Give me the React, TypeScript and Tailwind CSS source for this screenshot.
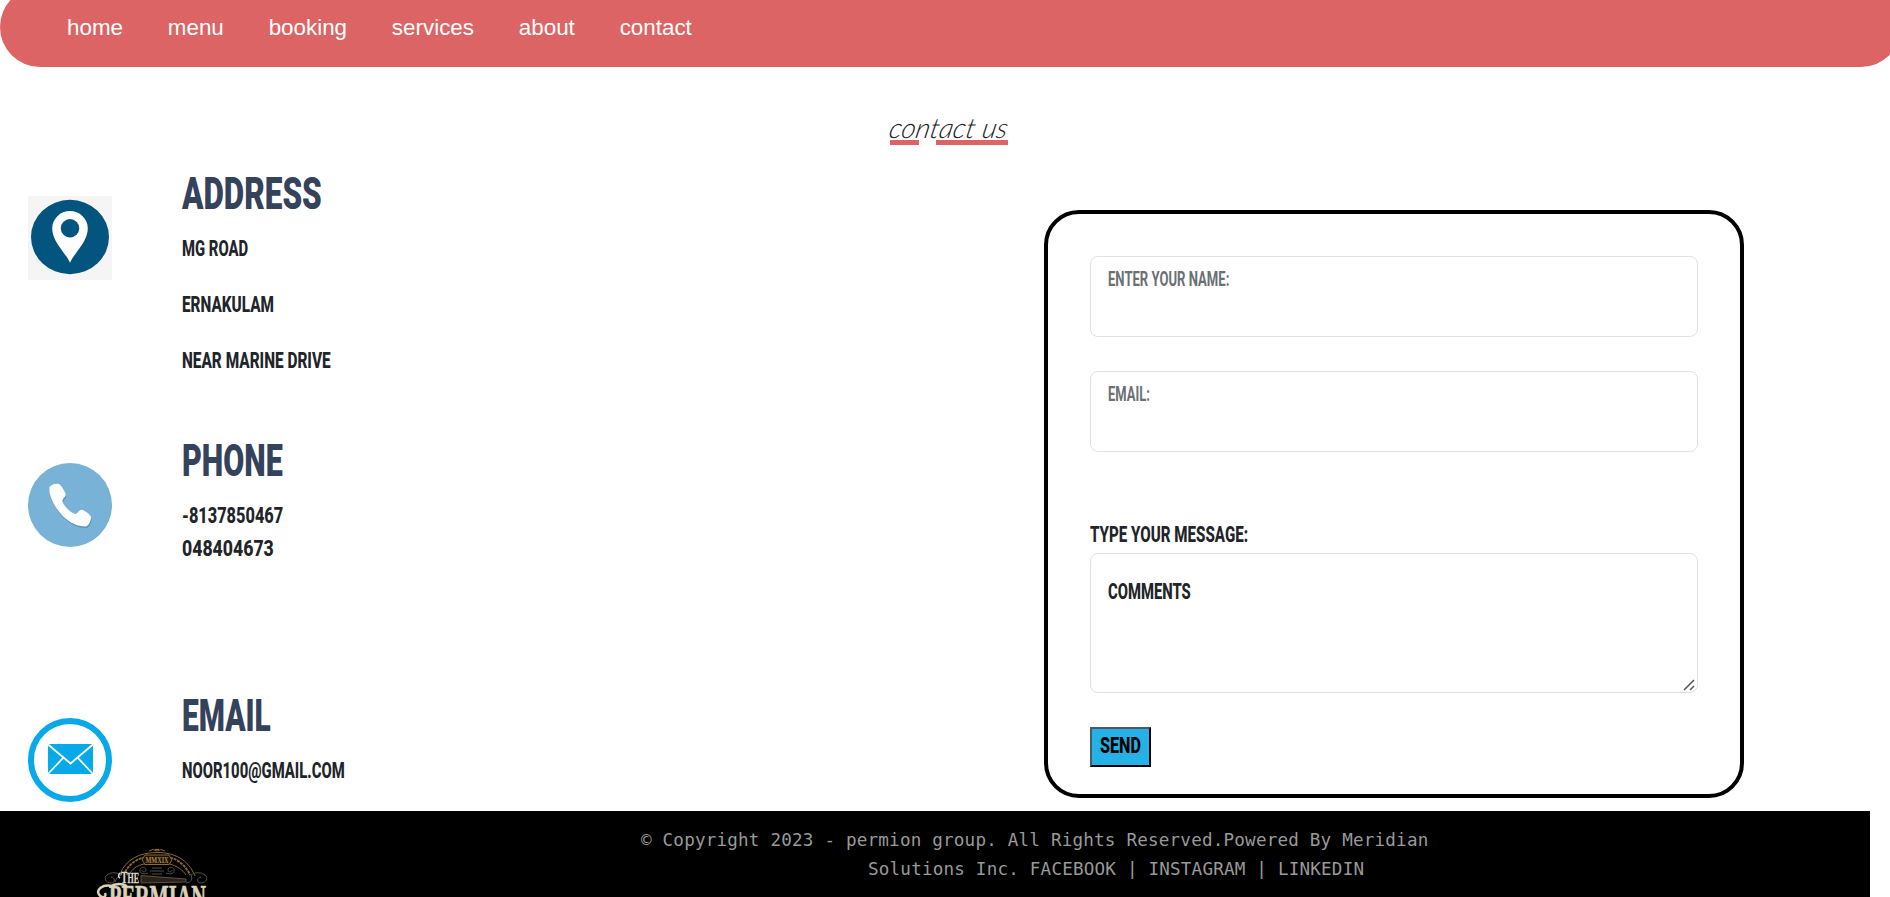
import { useLayoutEffect, useRef, useState } from "react";
import type { ReactNode } from "react";

/* Condenses a single line of text horizontally so that it spans `width` pixels. */
function Condensed({ width, className = "", children }: { width: number; className?: string; children: ReactNode }) {
  const ref = useRef<HTMLSpanElement>(null);
  const [scale, setScale] = useState(1);
  useLayoutEffect(() => {
    if (ref.current) setScale(width / ref.current.offsetWidth);
  }, [width]);
  return (
    <span className={"flex items-center whitespace-nowrap " + className} style={{ width }}>
      <span ref={ref} className="inline-block shrink-0 origin-left" style={{ transform: `scaleX(${scale})` }}>
        {children}
      </span>
    </span>
  );
}

const links = ["home", "menu", "booking", "services", "about", "contact"];

function PinIcon() {
  return (
    <svg viewBox="0 0 84 84" className="size-[84px]">
      <rect width="84" height="84" fill="#f5f5f5" />
      <ellipse cx="42" cy="41" rx="39" ry="37.2" fill="#03547f" />
      <path d="M42 66.8C38.500 58 24.200 46 24.200 32.500A17.800 17.500 0 0 1 59.800 32.500C59.800 46 45.500 58 42 66.800Z" fill="#fff" />
      <circle cx="42" cy="32.300" r="9.200" fill="#03547f" />
    </svg>
  );
}

const handset =
  "M21.500 24C23 21.500 28 20 31 21C34 23 36.500 28 37.700 31C38 34 34.500 35.500 34.400 38.500C36.500 43.500 42 49.500 47.200 51C50 50.500 51 46.500 54 46.700C57.500 48 61 50.500 62.800 53.300C63.500 56 61.500 62 58.700 63.200C50 64.500 39 58.500 32.500 50.500C26 43 20.500 32 21.500 24Z";

function PhoneIcon() {
  return (
    <svg viewBox="0 0 84 84" className="size-[84px]">
      <circle cx="42" cy="42" r="42" fill="#78b3d7" />
      <path d={handset} fill="#5d92b4" transform="translate(0.500 1.600)" />
      <path d={handset} fill="#fff" />
    </svg>
  );
}

function MailIcon() {
  return (
    <svg viewBox="0 0 84 84" className="size-[84px]">
      <circle cx="42" cy="42" r="39" fill="#fff" stroke="#08a9e9" strokeWidth="6" />
      <rect x="20" y="26" width="45" height="30" fill="#08a9e9" />
      <path d="M19.500 26L42.500 45.500L65.500 26M19.500 56.500L35.500 39.500M65.500 56.500L49.500 39.500" fill="none" stroke="#fff" strokeWidth="1.800" />
    </svg>
  );
}

function Logo() {
  return (
    <svg viewBox="0 0 116 50" className="h-[50px] w-[116px]" fill="none">
      <g stroke="#8a6a35" strokeWidth="1">
        <path d="M24 26C30 11 44 4.500 61 4.500S92 11 99 28" />
        <path d="M29 24C35 14 42 11 48 9.500M74 9.500C83 12 90 18 94 27" strokeWidth="1.800" strokeDasharray="3 0.800" />
        <path d="M34 25C38 19 43 17 48 16H74C81 18 87 22 90 27" />
        <path d="M49 7H73L76 12L73 16.500H49L46 12Z" fill="#1a1208" />
        <path d="M53 3Q57 0 61 3Q65 0 69 3M59 1.500H63" />
      </g>
      <g stroke="#55504a" strokeWidth="1">
        <path d="M56 20H66M54 23H68M56 26H66" />
        <path d="M52 25C47 27 43 25 44 21.500S50 19 50 22S46 24 46 22M70 25C75 27 79 25 78 21.500S72 19 72 22S76 24 76 22" />
        <path d="M25 27C21 24 15 24 11 27S10 35 15 35S19 29 15 29M25 27Q20 29 19 34" />
        <path d="M95 27C99 24 105 24 109 27S110 35 105 35S101 29 105 29M95 27Q98 34 90 35" />
      </g>
      <path d="M45 27.500L90 31V34L45 35Z" fill="#2a2119" stroke="#75613f" strokeWidth="0.800" />
      <text x="61" y="15" textAnchor="middle" fontFamily="Liberation Serif, serif" fontWeight="700" fontSize="9" textLength="23" lengthAdjust="spacingAndGlyphs" fill="#b18843">
        MMXIX
      </text>
      <text x="25" y="35" fontFamily="Liberation Serif, serif" fontWeight="700" fontSize="17" textLength="18" lengthAdjust="spacingAndGlyphs" fill="#dcd8ce" stroke="#dcd8ce" strokeWidth="0.300">
        T<tspan fontSize="14">HE</tspan>
      </text>
      <path d="M24 25C22 27 22 29 24 30" stroke="#dcd8ce" strokeWidth="1.500" />
      <path d="M16 38C6 36 0 42 3 46.500S11 49 9 45M13 39C19 35.500 26 35.500 31 38" stroke="#d8d2b8" strokeWidth="2.400" />
      <text x="13" y="60" fontFamily="Liberation Serif, serif" fontWeight="700" fontSize="33" textLength="97" lengthAdjust="spacingAndGlyphs" fill="#d8d2b8" stroke="#d8d2b8" strokeWidth="0.700">
        PERMIAN
      </text>
    </svg>
  );
}

function Section({ icon, title, titleWidth, height, children }: { icon: ReactNode; title: string; titleWidth: number; height: string; children: ReactNode }) {
  return (
    <section className={"flex gap-[70px] pl-7 " + height}>
      <div className="shrink-0 pt-7">{icon}</div>
      <div className="pt-px">
        <h2>
          <Condensed width={titleWidth} className="h-[50px] text-[45px] font-black text-[#34425c]">
            {title}
          </Condensed>
        </h2>
        {children}
      </div>
    </section>
  );
}

export default function App() {
  return (
    <div className="flex h-[897px] flex-col overflow-hidden bg-white font-['Roboto',sans-serif] text-[#212529]">
      <nav className="-mt-[13px] flex h-20 w-[1901px] shrink-0 items-center gap-[44.8px] rounded-[40px] bg-[#dc6464] pl-[67px] pt-0.5 font-['Liberation_Sans',sans-serif] text-[22.4px] text-white">
        {links.map((l) => (
          <a key={l} href={"#" + l}>
            {l}
          </a>
        ))}
      </nav>

      <h1 className="relative ml-[890px] mt-[42px] h-[36px] w-[118px] shrink-0 font-['Lato',sans-serif] text-[28px] font-light italic leading-[36px] text-[#222]">
        <Condensed width={118} className="h-[36px]">
          <span className="inline-block -skew-x-12">contact us</span>
        </Condensed>
        <span className="absolute left-0 top-[31px] h-[5px] w-[29px] bg-[#dc6464]" />
        <span className="absolute left-[46px] top-[31px] h-[5px] w-[72px] bg-[#dc6464]" />
      </h1>

      <main className="flex h-[666px] shrink-0">
        <div className="w-[1044px] pt-[23px] text-[22.5px] font-extrabold">
          <Section icon={<PinIcon />} title="ADDRESS" titleWidth={140} height="h-[267px]">
            <div className="pt-[2px]">
              <Condensed width={66} className="h-14">MG ROAD</Condensed>
              <Condensed width={92} className="h-14">ERNAKULAM</Condensed>
              <Condensed width={149} className="h-14">NEAR MARINE DRIVE</Condensed>
            </div>
          </Section>
          <Section icon={<PhoneIcon />} title="PHONE" titleWidth={101} height="h-[255px]">
            <div className="pt-[13px]">
              <Condensed width={101} className="h-[33px]">-8137850467</Condensed>
              <Condensed width={92} className="h-[33px]">048404673</Condensed>
            </div>
          </Section>
          <Section icon={<MailIcon />} title="EMAIL" titleWidth={89} height="h-[120px]">
            <div className="pt-[13px]">
              <Condensed width={163} className="h-[33px]">NOOR100@GMAIL.COM</Condensed>
            </div>
          </Section>
        </div>

        <form className="mt-[65px] h-[588px] w-[700px] rounded-[35px] border-4 border-black px-[42px] pt-[42px] text-[22.5px] font-extrabold">
          <div className="h-[81px] rounded-lg border border-[#dee2e6] pl-[17px] pt-[10px] text-[20px] font-bold text-[#6c6f73]">
            <Condensed width={121} className="h-6">ENTER YOUR NAME:</Condensed>
          </div>
          <div className="mt-[34px] h-[81px] rounded-lg border border-[#dee2e6] pl-[17px] pt-[10px] text-[20px] font-bold text-[#6c6f73]">
            <Condensed width={42} className="h-6">EMAIL:</Condensed>
          </div>
          <label className="mt-[67px] block">
            <Condensed width={158} className="h-8">TYPE YOUR MESSAGE:</Condensed>
          </label>
          <div className="relative mt-[2px] h-[140px] rounded-lg border border-[#dee2e6] pl-[17px] pt-[22px]">
            <Condensed width={83} className="h-8">COMMENTS</Condensed>
            <svg viewBox="0 0 12 12" className="absolute bottom-px right-[2px] size-3" stroke="#555" strokeWidth="1.500">
              <path d="M1 11L11 1M7 11L11 7" />
            </svg>
          </div>
          <button type="button" className="mt-[34px] flex h-10 w-[61px] border-2 border-b-black border-l-[#4a5963] border-r-black border-t-[#4a5963] bg-[#25b0e6] pl-2 pt-px text-black">
            <Condensed width={41} className="h-8">SEND</Condensed>
          </button>
        </form>
      </main>

      <footer className="flex h-[86px] w-[1870px] shrink-0 bg-black">
        <div className="w-[641px] pl-24 pt-[37px]">
          <Logo />
        </div>
        <div className="whitespace-pre pt-[15px] font-['DejaVu_Sans_Mono',monospace] text-[17.6px] leading-[29px] tracking-[0.195px] text-[#999]">
          <p>© Copyright 2023 - permion group. All Rights Reserved.Powered By Meridian</p>
          <p className="pl-[227px]">Solutions Inc. FACEBOOK | INSTAGRAM | LINKEDIN</p>
        </div>
      </footer>
    </div>
  );
}
